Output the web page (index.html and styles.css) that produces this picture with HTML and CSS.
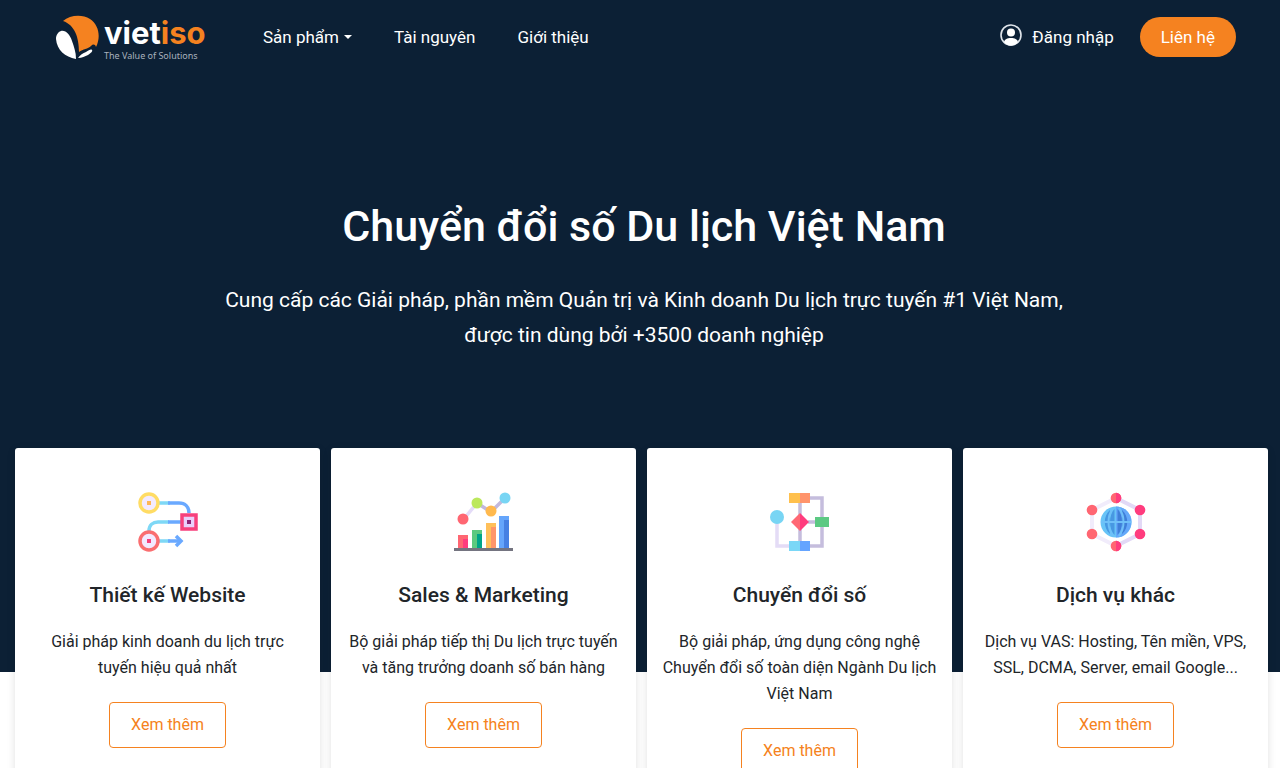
FILE: index.html
```html
<!DOCTYPE html>
<html lang="vi">
<head>
  <meta charset="UTF-8" />
  <meta name="viewport" content="width=device-width, initial-scale=1.0"/>
  <title>VietISO</title>
  <link rel="stylesheet" href="styles.css">
</head>
<body>
  <section class="hero">
    <header class="header">
      <a class="logo" href="#">
        <svg class="logo-mark" viewBox="0 0 44 44" width="44" height="44" aria-hidden="true">
          <path fill="#f58220" d="M7 6C14 0 26-1 34 4c9 6 11 18 6 28-1-3-3-3-5-1-3 3-8 3-12 6C23 23 19 10 7 6z"/>
          <path fill="#fff" d="M5 16c5-1 9 4 11 10s4 11 4 18C9 42 1 35 0 24c0-4 2-7 5-8z"/>
          <path fill="#fff" d="M22 43c2-3 5-5 8-6 3-2 5-3 6-2s-1 3-4 5c-3 1-6 3-10 3z"/>
        </svg>
        <span class="logo-text">
          <span class="logo-name">viet<span class="orange">iso</span></span>
          <span class="logo-slogan">The Value of Solutions</span>
        </span>
      </a>
      <nav class="menu">
        <a class="dropdown" href="#">Sản phẩm</a>
        <a href="#">Tài nguyên</a>
        <a href="#">Giới thiệu</a>
      </nav>
      <div class="account">
        <a class="login" href="#">
          <svg viewBox="0 0 22 22" width="22" height="22" aria-hidden="true">
            <circle cx="11" cy="11" r="10" fill="none" stroke="#dfe4ea" stroke-width="1.6"/>
            <circle cx="11" cy="8.5" r="4" fill="#fff"/>
            <path fill="#fff" d="M4 18c1-3 3-4 7-4s6 1 7 4c-4 5-10 5-14 0z"/>
          </svg>
          <span>Đăng nhập</span>
        </a>
        <a class="btn-contact" href="#">Liên hệ</a>
      </div>
    </header>

    <div class="hero-content">
      <h1>Chuyển đổi số Du lịch Việt Nam</h1>
      <p>Cung cấp các Giải pháp, phần mềm Quản trị và Kinh doanh Du lịch trực tuyến #1 Việt Nam, được tin dùng bởi +3500 doanh nghiệp</p>
    </div>
  </section>

  <main class="services">
    <article class="card">
      <svg viewBox="0 0 60 60" width="60" height="60" aria-hidden="true">
        <g fill="none" stroke-width="3.5">
          <path stroke="#7ed8f6" d="M20 11h12M11 39c0-6 4-9 9-9h11M20 49h12"/>
          <path stroke="#6aa9ff" d="M30 11h11c6 0 10 4 10 10M30 30h14M30 49h12"/>
          <path stroke="#6aa9ff" d="M38 44l5 5-5 5"/>
          <circle cx="11" cy="11" r="9" fill="#f3eaff" stroke="#ffdc64"/>
          <circle cx="11" cy="49" r="9" fill="#f3eaff" stroke="#fa6e70"/>
          <path fill="#e9d0fb" stroke="#f7407c" d="M44 23h14v14H44z"/>
        </g>
        <path fill="#ffb655" d="M9 9h4v4H9z"/>
        <path fill="#f7407c" d="M9 47h4v4H9z"/>
        <path fill="#8b2377" d="M49 28h4v4h-4z"/>
      </svg>
      <h2>Thiết kế Website</h2>
      <p>Giải pháp kinh doanh du lịch trực tuyến hiệu quả nhất</p>
      <a class="btn-more" href="#">Xem thêm</a>
    </article>

    <article class="card">
      <svg viewBox="0 0 60 60" width="60" height="60" aria-hidden="true">
        <path fill="none" stroke="#e4dcf8" stroke-width="3.5" d="M9 28l14-17"/>
        <path fill="none" stroke="#c2b9dc" stroke-width="3.5" d="M23 11l14 9L51 6"/>
        <circle cx="9" cy="27" r="5.5" fill="#ff6672"/>
        <circle cx="23" cy="11" r="5.5" fill="#bce85c"/>
        <circle cx="37" cy="19" r="5.5" fill="#ffb94e"/>
        <circle cx="51" cy="6" r="5.5" fill="#78d5f4"/>
        <path fill="#ff6672" d="M4 43h10v13H4z"/><path fill="#ff3c7e" d="M9 47h5v9H9z"/>
        <path fill="#5cc97f" d="M18 38h10v18H18z"/><path fill="#00a588" d="M23 42h5v14h-5z"/>
        <path fill="#ffc05a" d="M32 31h10v25H32z"/><path fill="#ff956a" d="M37 35h5v21h-5z"/>
        <path fill="#65a5fb" d="M45 24h10v32H45z"/><path fill="#4680e3" d="M50 28h5v28h-5z"/>
        <path fill="#747480" d="M0 56h59v3H0z"/>
      </svg>
      <h2>Sales &amp; Marketing</h2>
      <p>Bộ giải pháp tiếp thị Du lịch trực tuyến và tăng trưởng doanh số bán hàng</p>
      <a class="btn-more" href="#">Xem thêm</a>
    </article>

    <article class="card">
      <svg viewBox="0 0 60 60" width="60" height="60" aria-hidden="true">
        <path fill="none" stroke="#e4dcf6" stroke-width="3.5" d="M7 30v24h16"/>
        <path fill="none" stroke="#c5bddd" stroke-width="3.5" d="M38 6h14v48H34M30 8v45M38 30h13"/>
        <circle cx="7" cy="25" r="7" fill="#78d5f4"/>
        <path fill="#ffc04d" d="M19 1h11v10H19z"/><path fill="#ff946b" d="M30 1h10v10H30z"/>
        <path fill="#ff6874" d="M30 21v18l-9-9z"/><path fill="#ff3c7e" d="M30 21l9 9-9 9z"/>
        <path fill="#5cc983" d="M45 25h14v10H45z"/>
        <path fill="#7ad7f7" d="M19 49h11v10H19z"/><path fill="#65a4ff" d="M30 49h10v10H30z"/>
      </svg>
      <h2>Chuyển đổi số</h2>
      <p>Bộ giải pháp, ứng dụng công nghệ Chuyển đổi số toàn diện Ngành Du lịch Việt Nam</p>
      <a class="btn-more" href="#">Xem thêm</a>
    </article>

    <article class="card">
      <svg viewBox="0 0 60 60" width="60" height="60" aria-hidden="true">
        <path fill="none" stroke="#f1ecfb" stroke-width="4" d="M30 6L6 18v24l24 12"/>
        <path fill="none" stroke="#e2d9f6" stroke-width="4" d="M30 6l24 12v24L30 54"/>
        <circle cx="30" cy="30" r="15.5" fill="#68c4f7"/>
        <path fill="#64a8fa" d="M30 14.5a15.500 15.500 0 0 1 0 31z"/>
        <!-- meridians -->
        <path fill="#4798e2" d="M24 18v24c-7-6-7-18 0-24zM28.500 17v26c-6-6-6-20 0-26z"/>
        <path fill="#3f7fd8" d="M36 18v24c7-6 7-18 0-24zM31.500 17v26c6-6 6-20 0-26z"/>
        <path fill="none" stroke="#6fc0f8" stroke-width="2" d="M15 30h30M27 16c-6 8-6 20 0 28M33 16c6 8 6 20 0 28"/>
        <g fill="#ff6672">
          <circle cx="6" cy="18" r="5.300"/><circle cx="6" cy="42" r="5.300"/>
          <circle cx="30" cy="6" r="5.300"/><circle cx="30" cy="54" r="5.300"/>
        </g>
        <g fill="#ff3c7e">
          <circle cx="54" cy="18" r="5.300"/><circle cx="54" cy="42" r="5.300"/>
          <path d="M30 .7a5.300 5.300 0 0 1 0 10.600zM30 48.700a5.300 5.300 0 0 1 0 10.600z"/>
        </g>
      </svg>
      <h2>Dịch vụ khác</h2>
      <p>Dịch vụ VAS: Hosting, Tên miền, VPS, SSL, DCMA, Server, email Google...</p>
      <a class="btn-more" href="#">Xem thêm</a>
    </article>
  </main>
</body>
</html>
```

FILE: styles.css
```css
* {
  box-sizing: border-box;
}

body {
  margin: 0;
  background: #fff;
  font-family: Roboto, sans-serif;
  color: #212529;
}

a {
  color: inherit;
  text-decoration: none;
}

h1, h2, p {
  margin: 0;
}

.hero {
  background: #0c2035;
  color: #fff;
  padding-bottom: 319px;
}

/* Header */
.header {
  display: flex;
  align-items: center;
  height: 74px;
  padding: 0 44px 0 56px;
  font-size: 17px;
}

.logo {
  display: flex;
  gap: 4px;
  width: 207px;
}

.logo-text {
  display: flex;
  flex-direction: column;
}

.logo-name {
  font-family: Inter, sans-serif;
  font-size: 31px;
  font-weight: 700;
  line-height: 36px;
}

.orange {
  color: #f58220;
}

.logo-slogan {
  font-family: "Noto Sans", sans-serif;
  font-size: 9px;
  line-height: 9px;
  color: #a9b2bd;
}

.menu {
  display: flex;
  gap: 42px;
}

.dropdown::after {
  content: "";
  display: inline-block;
  margin-left: 5px;
  vertical-align: 4px;
  border-top: 4px solid;
  border-left: 4px solid transparent;
  border-right: 4px solid transparent;
}

.account {
  display: flex;
  align-items: center;
  gap: 26px;
  margin-left: auto;
}

.login {
  display: flex;
  align-items: flex-start;
  gap: 10px;
}

.login span {
  line-height: 27px;
}

.btn-contact {
  padding: 0 21px;
  line-height: 40px;
  border-radius: 20px;
  background: #f58220;
}

/* Hero text */
.hero-content {
  max-width: 880px;
  margin: 0 auto;
  padding: 126px 0 0 8px;
  text-align: center;
}

.hero-content h1 {
  font-size: 43px;
  font-weight: 500;
  line-height: 52px;
}

.hero-content p {
  margin-top: 31px;
  font-size: 21px;
  line-height: 35px;
}

/* Cards */
.services {
  position: relative;
  display: grid;
  grid-template-columns: repeat(4, 1fr);
  gap: 11px;
  margin-top: -224px;
  padding: 0 12px 30px 15px;
}

.card {
  display: flex;
  flex-direction: column;
  align-items: center;
  padding: 44px 15px 40px;
  border-radius: 3px;
  background: #fff;
  box-shadow: 0 2px 8px rgba(0, 0, 0, 0.12);
  text-align: center;
}

.card h2 {
  margin-top: 30px;
  font-size: 21px;
  font-weight: 500;
  line-height: 26px;
}

.card p {
  margin-top: 21px;
  font-size: 16px;
  line-height: 26px;
}

.btn-more {
  margin-top: 21px;
  padding: 0 21px;
  border: 1px solid #f58220;
  border-radius: 4px;
  color: #f58220;
  font-size: 16px;
  line-height: 44px;
}

@media (max-width: 900px) {
  .services {
    grid-template-columns: repeat(2, 1fr);
  }
}
```
